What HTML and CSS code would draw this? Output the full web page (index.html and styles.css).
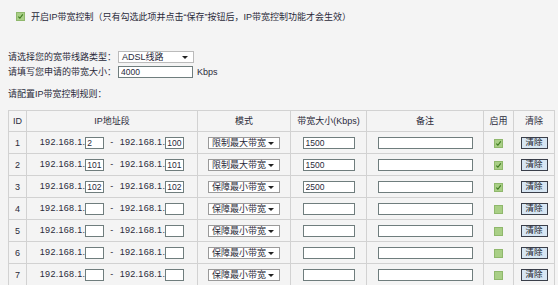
FILE: index.html
```html
<!DOCTYPE html>
<html lang="zh-CN">
<head>
    <meta charset="UTF-8">
    <title>IP带宽控制</title>
    <link rel="stylesheet" href="styles.css">
</head>
<body>

    <div class="enable-line">
        <span class="chk on"><svg viewBox="0 0 8 8"><path d="M1.5 4.2 L3.3 6 L6.6 1.6" /></svg></span>
        <span>开启IP带宽控制（只有勾选此项并点击“保存”按钮后，IP带宽控制功能才会生效）</span>
    </div>

    <div class="form-block">
        <div class="form-row">
            <label class="form-label">请选择您的宽带线路类型：</label>
            <div class="select line-select">ADSL线路<span class="arrow"></span></div>
        </div>
        <div class="form-row">
            <label class="form-label">请填写您申请的带宽大小：</label>
            <input type="text" class="field bw-total" value="4000">
            <span class="unit">Kbps</span>
        </div>
    </div>

    <div class="rules-title">请配置IP带宽控制规则：</div>

    <table class="rules">
        <tr>
            <th class="c-id">ID</th>
            <th class="c-ip">IP地址段</th>
            <th class="c-mode">模式</th>
            <th class="c-bw">带宽大小(Kbps)</th>
            <th class="c-note">备注</th>
            <th class="c-on">启用</th>
            <th class="c-clr">清除</th>
        </tr>
        <tr>
            <td>1</td>
            <td class="ip-cell">192.168.1.<input class="field ip" value="2"><span class="dash">-</span>192.168.1.<input class="field ip" value="100"></td>
            <td><div class="select mode">限制最大带宽<span class="arrow"></span></div></td>
            <td><input class="field bw" value="1500"></td>
            <td><input class="field note" value=""></td>
            <td><span class="chk on"><svg viewBox="0 0 8 8"><path d="M1.5 4.2 L3.3 6 L6.6 1.6" /></svg></span></td>
            <td><button class="clear-btn">清除</button></td>
        </tr>
        <tr>
            <td>2</td>
            <td class="ip-cell">192.168.1.<input class="field ip" value="101"><span class="dash">-</span>192.168.1.<input class="field ip" value="101"></td>
            <td><div class="select mode">限制最大带宽<span class="arrow"></span></div></td>
            <td><input class="field bw" value="1500"></td>
            <td><input class="field note" value=""></td>
            <td><span class="chk on"><svg viewBox="0 0 8 8"><path d="M1.5 4.2 L3.3 6 L6.6 1.6" /></svg></span></td>
            <td><button class="clear-btn">清除</button></td>
        </tr>
        <tr>
            <td>3</td>
            <td class="ip-cell">192.168.1.<input class="field ip" value="102"><span class="dash">-</span>192.168.1.<input class="field ip" value="102"></td>
            <td><div class="select mode">保障最小带宽<span class="arrow"></span></div></td>
            <td><input class="field bw" value="2500"></td>
            <td><input class="field note" value=""></td>
            <td><span class="chk on"><svg viewBox="0 0 8 8"><path d="M1.5 4.2 L3.3 6 L6.6 1.6" /></svg></span></td>
            <td><button class="clear-btn">清除</button></td>
        </tr>
        <tr>
            <td>4</td>
            <td class="ip-cell">192.168.1.<input class="field ip" value=""><span class="dash">-</span>192.168.1.<input class="field ip" value=""></td>
            <td><div class="select mode">保障最小带宽<span class="arrow"></span></div></td>
            <td><input class="field bw" value=""></td>
            <td><input class="field note" value=""></td>
            <td><span class="chk"></span></td>
            <td><button class="clear-btn">清除</button></td>
        </tr>
        <tr>
            <td>5</td>
            <td class="ip-cell">192.168.1.<input class="field ip" value=""><span class="dash">-</span>192.168.1.<input class="field ip" value=""></td>
            <td><div class="select mode">保障最小带宽<span class="arrow"></span></div></td>
            <td><input class="field bw" value=""></td>
            <td><input class="field note" value=""></td>
            <td><span class="chk"></span></td>
            <td><button class="clear-btn">清除</button></td>
        </tr>
        <tr>
            <td>6</td>
            <td class="ip-cell">192.168.1.<input class="field ip" value=""><span class="dash">-</span>192.168.1.<input class="field ip" value=""></td>
            <td><div class="select mode">保障最小带宽<span class="arrow"></span></div></td>
            <td><input class="field bw" value=""></td>
            <td><input class="field note" value=""></td>
            <td><span class="chk"></span></td>
            <td><button class="clear-btn">清除</button></td>
        </tr>
        <tr>
            <td>7</td>
            <td class="ip-cell">192.168.1.<input class="field ip" value=""><span class="dash">-</span>192.168.1.<input class="field ip" value=""></td>
            <td><div class="select mode">保障最小带宽<span class="arrow"></span></div></td>
            <td><input class="field bw" value=""></td>
            <td><input class="field note" value=""></td>
            <td><span class="chk"></span></td>
            <td><button class="clear-btn">清除</button></td>
        </tr>
    </table>

</body>
</html>
```

FILE: styles.css
```css
body {
    margin: 0;
    background-color: #f4f4f4;
    font-family: "Liberation Sans", "Noto Sans CJK SC", sans-serif;
    font-size: 9px;
    color: #2a2a3a;
    overflow: hidden;
}
.enable-line {
    display: flex;
    align-items: center;
    gap: 6px;
    padding: 11px 0 0 16px;
    height: 11px;
}
.chk {
    display: inline-block;
    width: 7px;
    height: 7px;
    background-color: #a9cf86;
    border: 1px solid #8fb86c;
    vertical-align: middle;
}
.chk svg {
    display: block;
    width: 7px;
    height: 7px;
}
.chk path {
    fill: none;
    stroke: #3d7a1e;
    stroke-width: 1.3;
}
.form-block {
    padding: 27px 0 0 8px;
}
.form-row {
    display: flex;
    align-items: center;
    height: 15px;
}
.form-label {
    width: 110px;
}
.select {
    position: relative;
    box-sizing: border-box;
    height: 12px;
    line-height: 10px;
    padding-left: 3px;
    background-color: #fff;
    border: 1px solid #9a9a9a;
    text-align: left;
}
.arrow {
    position: absolute;
    right: 5px;
    top: 4px;
    border-left: 3px solid transparent;
    border-right: 3px solid transparent;
    border-top: 3px solid #222;
}
.line-select {
    width: 76px;
    border-color: #bbb;
}
.field {
    box-sizing: border-box;
    height: 12px;
    margin: 0;
    padding: 0 2px;
    font-family: inherit;
    font-size: 8.5px;
    color: #2a2a3a;
    background-color: #fff;
    border: 1px solid #6f7d7d;
    outline: none;
    vertical-align: middle;
}
.bw-total {
    width: 75px;
}
.unit {
    margin-left: 4px;
}
.rules-title {
    padding: 8px 0 0 8px;
    height: 23px;
}
.rules {
    margin: 0 0 0 8px;
    border-collapse: collapse;
    table-layout: fixed;
    width: 540px;
}
.rules th,
.rules td {
    border: 1px solid #d2d2d2;
    padding: 0;
    text-align: center;
    font-weight: normal;
    white-space: nowrap;
    line-height: 12px;
}
.rules th {
    height: 20px;
}
.rules td {
    height: 21px;
}
.c-id { width: 17px; }
.c-ip { width: 170px; }
.c-mode { width: 92px; }
.c-bw { width: 75px; }
.c-note { width: 116px; }
.c-on { width: 29px; }
.c-clr { width: 40px; }
.ip-cell {
    letter-spacing: 0.3px;
}
.ip {
    width: 19px;
    padding: 0 1px;
    letter-spacing: 0;
}
.dash {
    margin: 0 6px;
}
.mode {
    display: inline-block;
    width: 72px;
    vertical-align: middle;
}
.bw {
    width: 52px;
}
.note {
    width: 95px;
}
.clear-btn {
    box-sizing: border-box;
    height: 12px;
    width: 27px;
    padding: 0;
    font-family: inherit;
    font-size: 8.5px;
    line-height: 9px;
    color: #1a1a2a;
    background-color: #d7e6f3;
    border: 1px solid #3a3f4a;
    vertical-align: middle;
}
```
